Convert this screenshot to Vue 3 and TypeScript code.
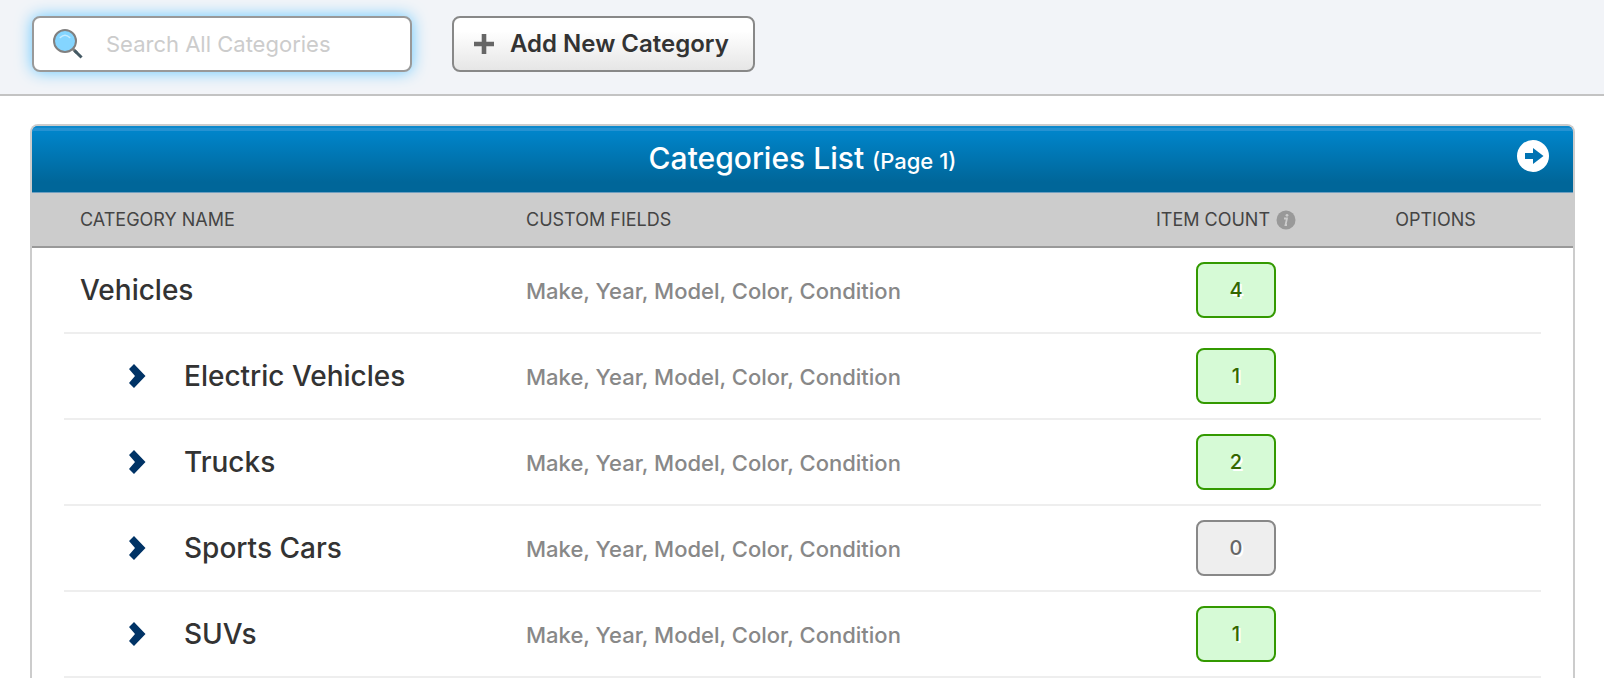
<script setup lang="ts">
import { ref } from 'vue'

interface Category {
  name: string
  fields: string
  count: number
  child: boolean
}

const fields = 'Make, Year, Model, Color, Condition'
const search = ref('')
const categories: Category[] = [
  { name: 'Vehicles', fields, count: 4, child: false },
  { name: 'Electric Vehicles', fields, count: 1, child: true },
  { name: 'Trucks', fields, count: 2, child: true },
  { name: 'Sports Cars', fields, count: 0, child: true },
  { name: 'SUVs', fields, count: 1, child: true },
]
</script>

<template>
  <div class="page">
    <header class="toolbar">
      <label class="search">
        <svg class="search-icon" viewBox="0 0 32 32" aria-hidden="true">
          <path d="M20 20l5 5" stroke="#808080" stroke-width="3" />
          <path d="M23.500 23.500l5 5" stroke="#455a64" stroke-width="3" stroke-linecap="square" />
          <circle cx="13" cy="13" r="11" fill="#84d5ff" stroke="#808080" stroke-width="2" />
          <path d="M8.300 9.500Q13 5 17.700 9.500" fill="none" stroke="#c5ebff" stroke-width="1.600" stroke-linecap="round" />
        </svg>
        <input v-model="search" type="text" placeholder="Search All Categories" aria-label="Search All Categories" />
      </label>
      <button class="add" type="button">
        <svg class="plus" viewBox="0 0 20 20" aria-hidden="true">
          <path d="M7.700 0h4.600v7.700H20v4.600h-7.700V20H7.700v-7.700H0V7.700h7.700z" fill="#666" />
        </svg>
        Add New Category
      </button>
    </header>

    <main class="card">
      <div class="title-bar">
        <h1>Categories List <small>(Page 1)</small></h1>
        <a class="next" href="#" aria-label="Next page">
          <svg viewBox="0 0 32 32" aria-hidden="true">
            <circle cx="16" cy="16" r="16" fill="#fff" />
            <path d="M8 13h8V8l10.500 8L16 24v-5H8z" fill="#0073b3" />
          </svg>
        </a>
      </div>
      <table>
        <thead>
          <tr>
            <th scope="col">CATEGORY NAME</th>
            <th scope="col">CUSTOM FIELDS</th>
            <th scope="col" class="count-head">
              ITEM COUNT
              <svg class="info" viewBox="0 0 20 20" aria-hidden="true">
                <circle cx="10" cy="10" r="9.500" fill="#999" />
                <circle cx="11" cy="5.300" r="1.400" fill="#ccc" />
                <path d="M8 8.500h3l-1.500 6.500h1.500" fill="none" stroke="#ccc" stroke-width="1.800" />
              </svg>
            </th>
            <th scope="col" class="options">OPTIONS</th>
          </tr>
        </thead>
        <tbody>
          <tr v-for="category in categories" :key="category.name">
            <td class="name" :class="{ child: category.child }">
              <svg v-if="category.child" class="chevron" viewBox="0 0 18 24" aria-hidden="true">
                <path d="M6 0L17.500 12 6 24 1 19l6-7-6-7z" fill="#003366" />
              </svg>
              {{ category.name }}
            </td>
            <td class="fields">{{ category.fields }}</td>
            <td class="count">
              <span class="badge" :class="{ empty: category.count === 0 }">{{ category.count }}</span>
            </td>
            <td></td>
          </tr>
        </tbody>
      </table>
    </main>
  </div>
</template>

<style>
body {
  margin: 0;
  background: #fff;
}
</style>

<style scoped>
* {
  box-sizing: border-box;
}

.page {
  font-family: Inter, "Liberation Sans", sans-serif;
  color: #333;
}

.toolbar {
  display: flex;
  gap: 40px;
  padding: 16px 32px 22px;
  background: #f2f4f8;
  border-bottom: 2px solid #c3c3c3;
}

.search {
  display: flex;
  align-items: center;
  gap: 22px;
  width: 380px;
  height: 56px;
  padding: 0 18px;
  background: #fff;
  border: 2px solid #999;
  border-radius: 8px;
  box-shadow: 0 0 16px #66c8ff;
}

.search-icon {
  flex: none;
  width: 32px;
  height: 32px;
}

.search input {
  flex: 1;
  min-width: 0;
  padding: 0;
  border: 0;
  outline: 0;
  background: none;
  font: 400 22px/28px Inter, "Liberation Sans", sans-serif;
  color: #333;
}

.search input::placeholder {
  color: #ccc;
  opacity: 1;
}

.add {
  display: flex;
  align-items: center;
  gap: 16px;
  height: 56px;
  padding: 0 24px 0 20px;
  border: 2px solid #888;
  border-radius: 8px;
  background: linear-gradient(#fff 25%, #e6e6e6);
  font: 600 24px/28px Inter, "Liberation Sans", sans-serif;
  color: #333;
}

.plus {
  width: 20px;
  height: 20px;
}

.card {
  margin: 28px 29px 0 30px;
  border: 2px solid #ccc;
  border-bottom: 0;
  border-radius: 8px 8px 0 0;
  overflow: hidden;
}

.title-bar {
  display: grid;
  grid-template-columns: 1fr auto 1fr;
  height: 67px;
  padding: 0 24px;
  border-bottom: 1px solid #6f9fc0;
  background: linear-gradient(#0084c9 10%, #006699 85%);
  box-shadow: inset 0 2px #0c88cb, inset 0 5px #2592d2;
}

h1 {
  grid-column: 2;
  margin: 0;
  font-size: 30px;
  line-height: 64px;
  font-weight: 500;
  color: #fff;
}

h1 small {
  font-size: 22px;
}

.next {
  justify-self: end;
  width: 32px;
  height: 32px;
  margin-top: 14px;
}

.next svg {
  display: block;
}

table,
thead,
tbody {
  display: block;
}

thead,
tbody {
  padding: 0 32px;
}

thead {
  background: #ccc;
  border-bottom: 2px solid #999;
}

tr {
  display: grid;
  grid-template-columns: 446fr 626fr 200fr 205fr;
  align-items: center;
}

tbody tr {
  height: 86px;
  border-bottom: 2px solid #eee;
}

th,
td {
  padding: 0 16px;
  text-align: left;
}

th {
  font-size: 18px;
  line-height: 53px;
  font-weight: 400;
  color: #444;
}

.count-head {
  display: flex;
  align-items: center;
  justify-content: center;
  gap: 6px;
  padding: 0 20px 0 0;
  white-space: nowrap;
}

.info {
  width: 20px;
  height: 20px;
}

.options {
  padding: 0 20px 0 14px;
  text-align: center;
}

.name {
  display: flex;
  align-items: center;
  gap: 38px;
  font-size: 28px;
  line-height: 36px;
  font-weight: 500;
}

.child {
  padding-left: 64px;
}

.chevron {
  flex: none;
  width: 18px;
  height: 24px;
}

.fields {
  padding-top: 2px;
  font-size: 22px;
  line-height: 28px;
  font-weight: 500;
  color: #888;
}

.count {
  padding: 0;
}

.badge {
  display: block;
  width: 80px;
  margin: 0 auto;
  border: 2px solid #339900;
  border-radius: 8px;
  background: #d6fad6;
  font-size: 20px;
  line-height: 52px;
  font-weight: 500;
  text-align: center;
  color: #336600;
  text-shadow: 2px 2px #fff;
}

.badge.empty {
  border-color: #888;
  background: #eee;
  color: #666;
}
</style>
